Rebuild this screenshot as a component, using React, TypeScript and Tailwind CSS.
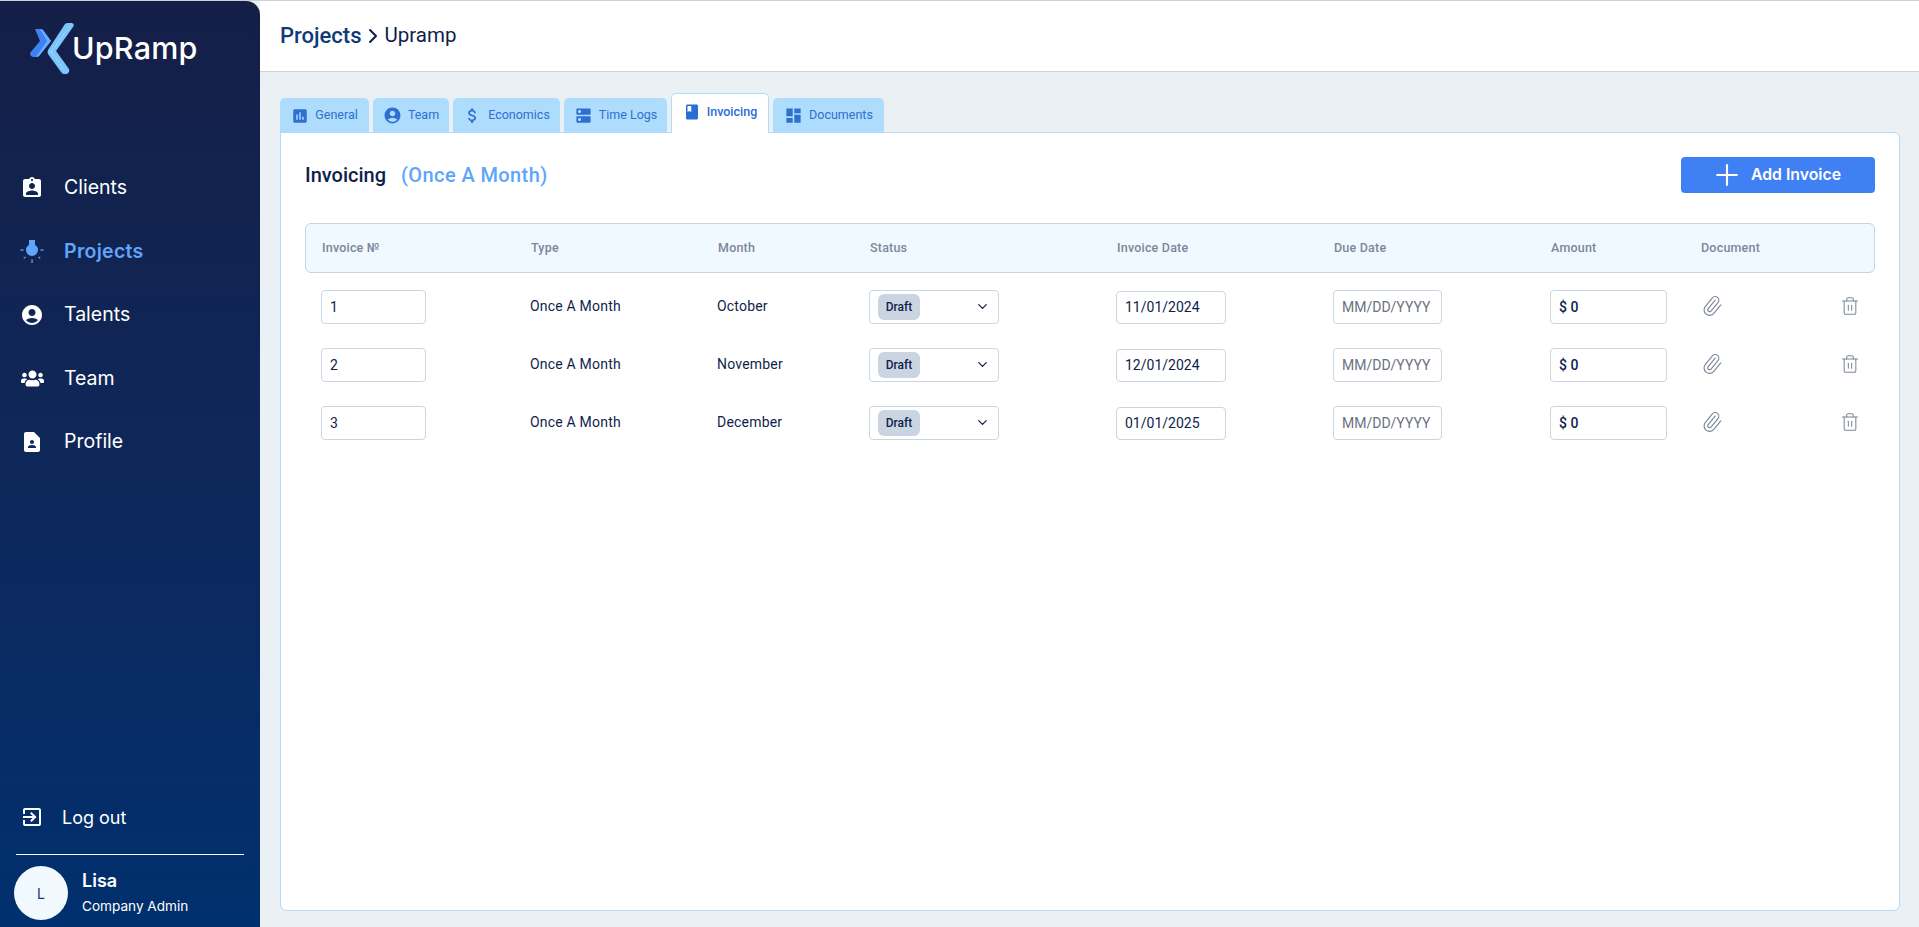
import React from 'react';
import { Paperclip, Trash2, Plus, ChevronDown, ChevronRight } from 'lucide-react';
import {
  MdAssessment,
  MdAccountCircle,
  MdAttachMoney,
  MdDns,
  MdBook,
  MdDashboard,
  MdAssignmentInd,
  MdContactPage,
  MdExitToApp,
} from 'react-icons/md';
import { FaUsers } from 'react-icons/fa';

const Logo = () => (
  <svg width="48" height="56" viewBox="28 18 48 56" className="shrink-0">
    <path d="M35 27h5q2 0 3 1l8 11-12 15q-1 1-3 1h-3q-3-1-3-4l10-12z" fill="#3f80f4" />
    <path d="M40 27q2 0 3 1l8 11-12 15q-1 1-3 1l11-16z" fill="#65aeff" />
    <path d="M65 22q1-1 3-1h4q3 1 1 4L56 49l13 18q1 3-2 5h-3q-2 0-3-2L48 52q-1-2 0-4z" fill="#7cc5fb" />
    <path d="M51 50l19-26M51 50l14 19" stroke="#d3efff" strokeWidth="1" strokeDasharray="1 2" fill="none" />
  </svg>
);

const BulbIcon = () => (
  <svg width="24" height="24" viewBox="0 0 24 24" fill="#60a5fa">
    <path d="M9 0h6v5c2 1 3 2.600 3 5a6 6 0 0 1-12 0c0-2.400 1-4 3-5z" />
    <rect x="0.500" y="9.400" width="3" height="1.300" />
    <rect x="20.500" y="9.400" width="3" height="1.300" />
    <rect x="11.400" y="19.500" width="1.300" height="3.500" />
    <rect x="3.500" y="17" width="2.200" height="1.300" transform="rotate(-40 4.600 17.600)" />
    <rect x="18.300" y="17" width="2.200" height="1.300" transform="rotate(40 19.400 17.600)" />
  </svg>
);

const navItems = [
  { label: 'Clients', icon: <MdAssignmentInd size={24} /> },
  { label: 'Projects', icon: <BulbIcon />, active: true },
  { label: 'Talents', icon: <MdAccountCircle size={24} /> },
  { label: 'Team', icon: <FaUsers size={23} /> },
  { label: 'Profile', icon: <MdContactPage size={24} /> },
];

const tabs = [
  { label: 'General', icon: <MdAssessment size={18} />, width: 'w-[89px]' },
  { label: 'Team', icon: <MdAccountCircle size={19} />, width: 'w-[76px]' },
  { label: 'Economics', icon: <MdAttachMoney size={19} />, width: 'w-[107px]' },
  { label: 'Time Logs', icon: <MdDns size={19} />, width: 'w-[103px]' },
  { label: 'Invoicing', icon: <MdBook size={18} />, width: 'w-[98px]', active: true },
  { label: 'Documents', icon: <MdDashboard size={19} />, width: 'w-[111px]' },
];

const rows = [
  { no: '1', month: 'October', date: '11/01/2024' },
  { no: '2', month: 'November', date: '12/01/2024' },
  { no: '3', month: 'December', date: '01/01/2025' },
];

const cols = 'grid grid-cols-[209px_187px_152px_247px_217px_217px_150px_1fr]';
const inputCls =
  'border border-[#cbd5e1] rounded-[4px] bg-white px-[8px] text-[14px] text-[#0f1f4b] outline-none placeholder:text-[#6b7280]';

const App: React.FC = () => {
  return (
    <div className="flex h-[927px] bg-[#ebf0f4] border-t border-[#cfcfcf] font-['Roboto',sans-serif] overflow-hidden">
      <aside className="w-[260px] shrink-0 flex flex-col rounded-tr-[14px] bg-gradient-to-b from-[#141f47] to-[#00306e] text-white font-['Inter',sans-serif]">
        <div className="flex items-start pl-[28px] pt-[19px] h-[167px]">
          <Logo />
          <span className="text-[30.500px] leading-[36px] font-medium -ml-[4px] mt-[10px] tracking-[0.2px]">UpRamp</span>
        </div>
        <nav className="flex flex-col gap-[23.500px] pl-[20px]">
          {navItems.map((item) => (
            <div
              key={item.label}
              className={`flex items-center gap-[20px] h-[40px] text-[19.500px] ${item.active ? 'text-[#60a5fa] font-semibold tracking-[0.3px]' : 'text-white'}`}
            >
              <span className="w-[24px] flex justify-center">{item.icon}</span>
              {item.label}
            </div>
          ))}
        </nav>
        <div className="mt-auto">
          <div className="flex items-center gap-[18px] pl-[20px] h-[24px] text-[18px] mb-[25px]">
            <MdExitToApp size={24} />
            Log out
          </div>
          <div className="mx-[16px] border-t border-white" />
          <div className="flex items-center gap-[14px] pl-[14px] pt-[11px] pb-[7px]">
            <div className="w-[54px] h-[54px] rounded-full bg-[#f1f9ff] text-[#0f3a78] text-[14px] flex items-center justify-center">L</div>
            <div>
              <div className="text-[18px] font-semibold leading-[24px]">Lisa</div>
              <div className="text-[13.600px] leading-[24px] mt-[1px]">Company Admin</div>
            </div>
          </div>
        </div>
      </aside>

      <main className="flex-1 min-w-0 flex flex-col">
        <header className="h-[71px] shrink-0 bg-white border-b border-[#cbd5e1] flex items-center pl-[20px] pb-[1px]">
          <span className="text-[#0f3a78] font-medium text-[22px]">Projects</span>
          <ChevronRight size={24} className="text-[#0f1f4b] -mr-[1px]" strokeWidth={2} />
          <span className="text-[#0f1f4b] text-[20.500px]">Upramp</span>
        </header>

        <div className="flex-1 flex flex-col pl-[20px] pr-[19px] pt-[21px] pb-[16px] min-h-0">
          <div className="flex items-end gap-[4px] h-[40px] relative z-10 -mb-px">
            {tabs.map((tab) => (
              <div
                key={tab.label}
                className={`${tab.width} flex items-center justify-center gap-[6px] rounded-t-[5px] text-[12.500px] ${
                  tab.active
                    ? 'h-[40px] bg-white border border-b-0 border-[#aedcfd] text-[#2a6dd6] font-medium pb-[3px]'
                    : 'h-[35px] bg-[#aedcfd] text-[#2f6fd0]'
                }`}
              >
                {tab.icon}
                {tab.label}
              </div>
            ))}
          </div>

          <section className="flex-1 bg-white border border-[#aedcfd] rounded-b-[6px] rounded-tr-[6px] pl-[24px] pr-[20px] pt-[24px]">
            <div className="flex items-center justify-between h-[36px] pr-[4px]">
              <h2 className="text-[20px] font-medium text-[#0f1f4b] flex gap-[15px]">
                Invoicing
                <span className="text-[#60a5fa] tracking-[0.4px]">(Once A Month)</span>
              </h2>
              <button className="w-[194px] h-[36px] rounded-[4px] bg-[#3f80f4] text-white text-[15.800px] font-semibold font-['Inter',sans-serif] flex items-center justify-center gap-[7px] pr-[5px]">
                <Plus size={34} strokeWidth={1.500} />
                Add Invoice
              </button>
            </div>

            <div className={`${cols} items-center h-[50px] mt-[30px] pl-[16px] mr-[4px] border border-[#cbd5e1] rounded-[6px] bg-[#f0f9ff] text-[12.500px] font-medium text-[#7c8798] tracking-[0.2px]`}>
              <div>Invoice №</div>
              <div>Type</div>
              <div>Month</div>
              <div>Status</div>
              <div>Invoice Date</div>
              <div>Due Date</div>
              <div>Amount</div>
              <div>Document</div>
            </div>

            <div className="flex flex-col gap-[24px] mt-[17px] pl-[16px] mr-[4px]">
              {rows.map((row) => (
                <div key={row.no} className={`${cols} items-center text-[14px] text-[#0f1f4b]`}>
                  <input className={`${inputCls} h-[34px] w-[105px]`} defaultValue={row.no} />
                  <div className="-mt-[2px] tracking-[0.2px]">Once A Month</div>
                  <div className="-mt-[2px] tracking-[0.2px]">{row.month}</div>
                  <div className="w-[130px] h-[34px] border border-[#cbd5e1] rounded-[4px] flex items-center justify-between pl-[8px] pr-[8px]">
                    <span className="w-[42px] h-[26px] rounded-[6px] bg-[#cbd5e1] text-[12px] font-medium flex items-center justify-center">Draft</span>
                    <ChevronDown size={15} strokeWidth={2} className="-mt-[2px]" />
                  </div>
                  <input className={`${inputCls} h-[33px] mt-[1px] w-[110px] pb-[2px]`} defaultValue={row.date} />
                  <input className={`${inputCls} h-[34px] w-[109px]`} placeholder="MM/DD/YYYY" />
                  <input className={`${inputCls} h-[34px] w-[117px] font-medium`} defaultValue="$ 0" />
                  <div className="flex items-center justify-between pr-[15px] -mt-[2px]">
                    <Paperclip size={22} strokeWidth={1.250} className="text-[#7c8798] ml-[1px] rotate-[-5deg]" />
                    <Trash2 size={20} strokeWidth={1.250} className="text-[#7c8798]" />
                  </div>
                </div>
              ))}
            </div>
          </section>
        </div>
      </main>
    </div>
  );
};

export default App;
